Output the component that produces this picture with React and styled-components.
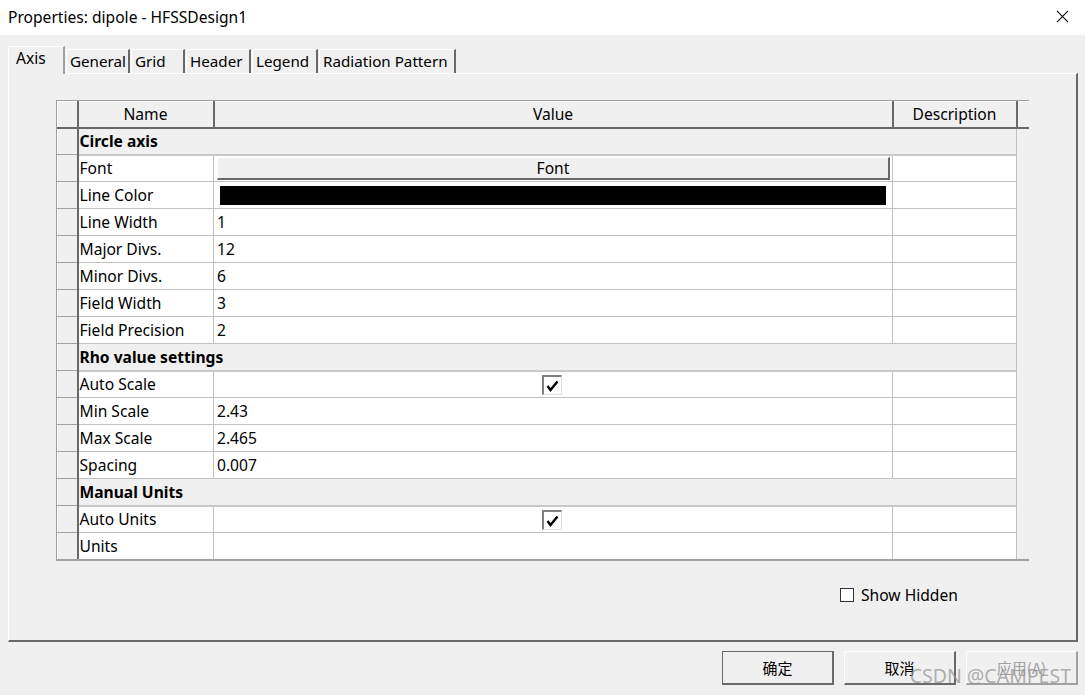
import React from 'react';
import styled, { createGlobalStyle } from 'styled-components';

const GlobalStyle = createGlobalStyle`
  html, body {
    margin: 0;
    padding: 0;
    background: #f0f0f0;
  }
  body {
    font-family: 'Noto Sans', 'Noto Sans CJK SC', sans-serif;
    font-size: 15.6px;
    color: #000;
  }
`;

const rows = [
  { group: 'Circle axis' },
  { name: 'Font', kind: 'button', value: 'Font' },
  { name: 'Line Color', kind: 'color' },
  { name: 'Line Width', value: '1' },
  { name: 'Major Divs.', value: '12' },
  { name: 'Minor Divs.', value: '6' },
  { name: 'Field Width', value: '3' },
  { name: 'Field Precision', value: '2' },
  { group: 'Rho value settings' },
  { name: 'Auto Scale', kind: 'check' },
  { name: 'Min Scale', value: '2.43' },
  { name: 'Max Scale', value: '2.465' },
  { name: 'Spacing', value: '0.007' },
  { group: 'Manual Units' },
  { name: 'Auto Units', kind: 'check' },
  { name: 'Units', value: '' },
];

const tabs = ['Axis', 'General', 'Grid', 'Header', 'Legend', 'Radiation Pattern'];
const tabWidths = [57, 64, 54, 65, 66, 137];

export default function App() {
  return (
    <Window>
      <GlobalStyle />
      <TitleBar>
        <Title>Properties: dipole - HFSSDesign1</Title>
        <CloseIcon viewBox="0 0 14 14">
          <path d="M1 1 L13 13 M13 1 L1 13" stroke="#000" strokeWidth="1.1" />
        </CloseIcon>
      </TitleBar>
      <Body>
        <TabStrip>
          {tabs.map((t, i) => (
            <Tab key={t} $active={i === 0} style={{ width: tabWidths[i] }}>
              {t}
            </Tab>
          ))}
        </TabStrip>
        <Panel>
          <GridFrame>
            <Table>
              <colgroup>
                <col style={{ width: 20 }} />
                <col style={{ width: 136 }} />
                <col style={{ width: 679 }} />
                <col style={{ width: 124 }} />
                <col style={{ width: 13 }} />
              </colgroup>
              <thead>
                <tr>
                  <HeadCell />
                  <HeadCell>Name</HeadCell>
                  <HeadCell>Value</HeadCell>
                  <HeadCell>Description</HeadCell>
                  <HeadCell />
                </tr>
              </thead>
              <tbody>
                {rows.map((r, i) =>
                  r.group ? (
                    <tr key={i}>
                      <RowHead />
                      <GroupCell colSpan={3}>{r.group}</GroupCell>
                      <Filler />
                    </tr>
                  ) : (
                    <tr key={i}>
                      <RowHead />
                      <Cell>{r.name}</Cell>
                      <ValueCell $center={r.kind === 'check' || r.kind === 'button'}>
                        {r.kind === 'button' && <FontButton>{r.value}</FontButton>}
                        {r.kind === 'color' && <ColorSwatch />}
                        {r.kind === 'check' && (
                          <CheckBox>
                            <svg width="13" height="12" viewBox="0 0 13 12">
                              <path d="M1.5 6 L4.5 10 L11.5 1.5" fill="none" stroke="#000" strokeWidth="2.4" />
                            </svg>
                          </CheckBox>
                        )}
                        {!r.kind && r.value}
                      </ValueCell>
                      <Cell />
                      <Filler />
                    </tr>
                  )
                )}
              </tbody>
            </Table>
          </GridFrame>
          <HiddenRow>
            <EmptyBox />
            <span>Show Hidden</span>
          </HiddenRow>
        </Panel>
        <Buttons>
          <DlgButton $default>确定</DlgButton>
          <DlgButton>取消</DlgButton>
          <DlgButton $disabled>应用(A)</DlgButton>
        </Buttons>
        <Watermark>CSDN @CAMPEST</Watermark>
      </Body>
    </Window>
  );
}

const Window = styled.div`
  width: 1085px;
  height: 695px;
  overflow: hidden;
  background: #f0f0f0;
`;

const TitleBar = styled.div`
  height: 35px;
  background: #fff;
  display: flex;
  align-items: center;
  justify-content: space-between;
  padding: 0 16px 0 8px;
`;

const Title = styled.div`
  margin-top: -2px;
`;

const CloseIcon = styled.svg`
  width: 13px;
  height: 13px;
  margin-top: -3px;
`;

const Body = styled.div`
  position: relative;
  padding: 10px 7px 0 8px;
`;

const TabStrip = styled.div`
  display: flex;
  align-items: flex-end;
  height: 28px;
  position: relative;
  z-index: 1;
`;

const Tab = styled.div`
  box-sizing: border-box;
  height: ${(p) => (p.$active ? '28px' : '24px')};
  padding: ${(p) => (p.$active ? '0 0 0 7px' : '0 0 0 3px')};
  margin-left: 1px;
  background: #f0f0f0;
  border-top: 1px solid #fff;
  border-left: 1px solid #fff;
  border-right: 2px solid #696969;
  border-top-left-radius: 2px;
  font-size: 15.2px;
  line-height: 22px;
  white-space: nowrap;
  overflow: hidden;
  ${(p) => p.$active && 'border-right-color: #a0a0a0; margin-bottom: -1px; font-size: 15.6px;'}
  &:first-child {
    margin-left: 0;
  }
`;

const Panel = styled.div`
  box-sizing: border-box;
  height: 569px;
  border-top: 1px solid #fff;
  border-left: 1px solid #fff;
  border-right: 2px solid #696969;
  border-bottom: 2px solid #696969;
  padding: 26px 0 0 47px;
`;

const GridFrame = styled.div`
  width: 973px;
  height: 461px;
  box-sizing: border-box;
  border-top: 1px solid #a0a0a0;
  border-left: 1px solid #a0a0a0;
  border-bottom: 2px solid #a0a0a0;
  background: #f0f0f0;
  overflow: hidden;
`;

const Table = styled.table`
  border-collapse: collapse;
  table-layout: fixed;
  width: 972px;
  td, th {
    padding: 0;
    height: 27px;
    box-sizing: border-box;
    line-height: 24px;
  }
`;

const HeadCell = styled.th`
  font-weight: normal;
  text-align: center;
  background: #f0f0f0;
  border-top: 1px solid #fff;
  border-left: 1px solid #fff;
  border-right: 2px solid #696969;
  border-bottom: 2px solid #696969;
  height: 26px !important;
`;

const RowHead = styled.td`
  background: #f0f0f0;
  border-top: 1px solid #fff;
  border-left: 1px solid #fff;
  border-right: 2px solid #696969;
  border-bottom: 1px solid #a0a0a0;
`;

const GroupCell = styled.td`
  background: #f0f0f0;
  font-weight: bold;
  padding-left: 1px !important;
  border-bottom: 2px solid #c8c8c8;
`;

const Cell = styled.td`
  background: #fff;
  padding-left: 1px !important;
  border-right: 1px solid #c0c0c0;
  border-bottom: 1px solid #c0c0c0;
  white-space: nowrap;
`;

const ValueCell = styled(Cell)`
  text-align: ${(p) => (p.$center ? 'center' : 'left')};
  padding-left: 3px !important;
  padding-right: 2px !important;
`;

const Filler = styled.td`
  background: #f0f0f0;
  border-left: 1px solid #c0c0c0;
`;

const FontButton = styled.div`
  box-sizing: border-box;
  height: 23px;
  line-height: 20px;
  background: #f0f0f0;
  border-top: 1px solid #fff;
  border-left: 1px solid #fff;
  border-right: 2px solid #696969;
  border-bottom: 2px solid #696969;
  text-align: center;
`;

const ColorSwatch = styled.div`
  height: 19px;
  margin: 0 4px 0 3px;
  background: #000;
`;

const CheckBox = styled.span`
  display: inline-flex;
  align-items: center;
  justify-content: center;
  width: 20px;
  height: 20px;
  box-sizing: border-box;
  border-top: 2px solid #808080;
  border-left: 2px solid #808080;
  border-right: 1px solid #e0e0e0;
  border-bottom: 1px solid #e0e0e0;
  background: #fff;
  vertical-align: middle;
  margin: -2px 0 0 -3px;
`;

const HiddenRow = styled.div`
  display: flex;
  align-items: center;
  gap: 7px;
  margin: 23px 0 0 784px;
`;

const EmptyBox = styled.span`
  width: 14px;
  height: 14px;
  box-sizing: border-box;
  border: 1px solid #333;
  background: #fff;
`;

const Buttons = styled.div`
  display: flex;
  justify-content: flex-end;
  gap: 10px;
  margin-top: 9px;
`;

const DlgButton = styled.div`
  box-sizing: border-box;
  width: 112px;
  height: 34px;
  display: flex;
  align-items: center;
  justify-content: center;
  font-family: 'Noto Sans CJK SC', sans-serif;
  font-size: 15px;
  background: #f0f0f0;
  color: ${(p) => (p.$disabled ? '#a0a0a0' : '#000')};
  border-top: 1px solid #fff;
  border-left: 1px solid #fff;
  border-right: 2px solid ${(p) => (p.$disabled ? '#a0a0a0' : '#696969')};
  border-bottom: 2px solid ${(p) => (p.$disabled ? '#a0a0a0' : '#696969')};
  ${(p) => p.$default && 'outline: 1px solid #696969; outline-offset: -1px;'}
`;

const Watermark = styled.div`
  position: absolute;
  right: 14px;
  bottom: -4px;
  font-family: 'Noto Sans', sans-serif;
  font-size: 19.5px;
  color: rgba(150, 150, 150, 0.75);
  pointer-events: none;
`;
